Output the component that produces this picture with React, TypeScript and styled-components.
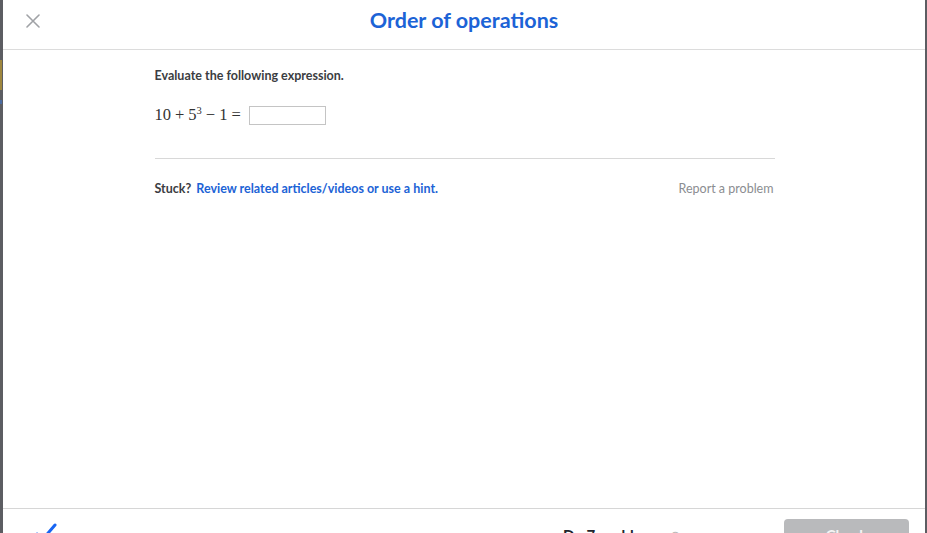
import styled, { createGlobalStyle } from "styled-components";

const GlobalStyle = createGlobalStyle`
  html, body {
    margin: 0;
    padding: 0;
    background: #5c5d62;
  }
  * {
    box-sizing: border-box;
  }
`;

const App = () => {
  return (
    <>
      <GlobalStyle />
      <Backdrop>
        <EdgeStrip>
          <EdgeMark $top={60} $h={30} $color="#c9a227" />
          <EdgeMark $top={100} $h={4} $color="#3f74c9" />
        </EdgeStrip>
        <Modal>
          <Header>
            <CloseButton aria-label="Close">
              <svg width="14" height="14" viewBox="0 0 14 14">
                <path d="M1 1 L13 13 M13 1 L1 13" stroke="#a0a2a6" strokeWidth="1.6" strokeLinecap="round" />
              </svg>
            </CloseButton>
            <Title>Order of operations</Title>
          </Header>

          <Body>
            <Content>
              <Prompt>Evaluate the following expression.</Prompt>
              <MathRow>
                <MathText>
                  10<Op>+</Op>5<sup>3</sup>
                  <Op>−</Op>1<Op>=</Op>
                </MathText>
                <AnswerInput type="text" />
              </MathRow>
              <Divider />
              <HelpRow>
                <Stuck>
                  Stuck? <HintLink href="#">Review related articles/videos or use a hint.</HintLink>
                </Stuck>
                <ReportLink href="#">Report a problem</ReportLink>
              </HelpRow>
            </Content>
          </Body>

          <Footer>
            <CheckMark>
              <svg width="22" height="18" viewBox="0 0 22 18">
                <path d="M2 11 L8 16 L20 2" stroke="#1865f2" strokeWidth="3" fill="none" strokeLinecap="round" strokeLinejoin="round" />
              </svg>
            </CheckMark>
            <Progress>Do 7 problems</Progress>
            <Dots>○</Dots>
            <CheckButton disabled>Check</CheckButton>
          </Footer>
        </Modal>
      </Backdrop>
    </>
  );
};

export default App;

//styled-components
const Backdrop = styled.div`
  display: flex;
  height: 533px;
  overflow: hidden;
  font-family: Lato, "Liberation Sans", sans-serif;
`;

const EdgeStrip = styled.div`
  position: relative;
  width: 3px;
  flex-shrink: 0;
`;

const EdgeMark = styled.div<{ $top: number; $h: number; $color: string }>`
  position: absolute;
  left: 0;
  top: ${(p) => p.$top}px;
  width: 2px;
  height: ${(p) => p.$h}px;
  background: ${(p) => p.$color};
  opacity: 0.6;
`;

const Modal = styled.div`
  width: 922px;
  height: 600px;
  flex-shrink: 0;
  background: #fff;
  display: flex;
  flex-direction: column;
`;

const Header = styled.div`
  height: 50px;
  flex-shrink: 0;
  border-bottom: 1px solid #dcdcdc;
  display: flex;
  align-items: flex-start;
  justify-content: center;
  position: relative;
  padding-top: 5px;
`;

const CloseButton = styled.button`
  position: absolute;
  left: 20px;
  top: 7px;
  width: 20px;
  height: 28px;
  padding: 0;
  border: none;
  background: none;
  display: flex;
  align-items: center;
  justify-content: center;
`;

const Title = styled.h1`
  margin: 0;
  font-size: 21.5px;
  font-weight: 700;
  line-height: 30px;
  color: #1c63d6;
`;

const Body = styled.div`
  height: 458px;
  flex-shrink: 0;
  display: flex;
  justify-content: center;
`;

const Content = styled.div`
  width: 620px;
  margin-left: 1px;
  padding-top: 17px;
`;

const Prompt = styled.div`
  font-size: 12.5px;
  font-weight: 700;
  color: #3b3d42;
  line-height: 17px;
`;

const MathRow = styled.div`
  display: flex;
  align-items: center;
  gap: 4px;
  margin-top: 20px;
`;

const MathText = styled.span`
  font-family: "Liberation Serif", "DejaVu Serif", serif;
  font-size: 16.5px;
  color: #333;
  line-height: 20px;

  sup {
    font-size: 10.5px;
    line-height: 0;
    vertical-align: 6px;
  }
`;

const Op = styled.span`
  padding: 0 4px;
`;

const AnswerInput = styled.input`
  width: 77px;
  height: 19px;
  border: 1px solid #c4c4c4;
  padding: 0 3px;
  margin-top: 2px;
`;

const Divider = styled.div`
  height: 1px;
  background: #d8d8d8;
  margin-top: 33px;
`;

const HelpRow = styled.div`
  display: flex;
  justify-content: space-between;
  align-items: center;
  margin-top: 21px;
  font-size: 12.5px;
  line-height: 17px;
`;

const Stuck = styled.span`
  font-weight: 700;
  color: #3b3d42;
`;

const HintLink = styled.a`
  color: #1c63d6;
  text-decoration: none;
  margin-left: 2px;
`;

const ReportLink = styled.a`
  color: #8b8d91;
  text-decoration: none;
  margin-right: 1px;
`;

const Footer = styled.div`
  flex-shrink: 0;
  border-top: 1px solid #d6d6d6;
  display: flex;
  align-items: flex-start;
  padding: 10px 16px 12px 32px;
  height: 70px;
`;

const CheckMark = styled.div`
  margin-top: 4px;
  width: 24px;
`;

const Progress = styled.span`
  margin-left: 504px;
  margin-top: 7px;
  font-size: 15px;
  font-weight: 700;
  color: #21242c;
`;

const Dots = styled.span`
  margin-left: 10px;
  margin-top: 7px;
  font-size: 14px;
  color: #bbb;
`;

const CheckButton = styled.button`
  margin-left: auto;
  width: 125px;
  height: 40px;
  border: none;
  border-radius: 4px;
  background: #b9babc;
  color: #f4f4f4;
  font-family: Lato, "Liberation Sans", sans-serif;
  font-size: 15px;
  font-weight: 700;
  padding: 7px 0 0;
  display: flex;
  align-items: flex-start;
  justify-content: center;
`;
